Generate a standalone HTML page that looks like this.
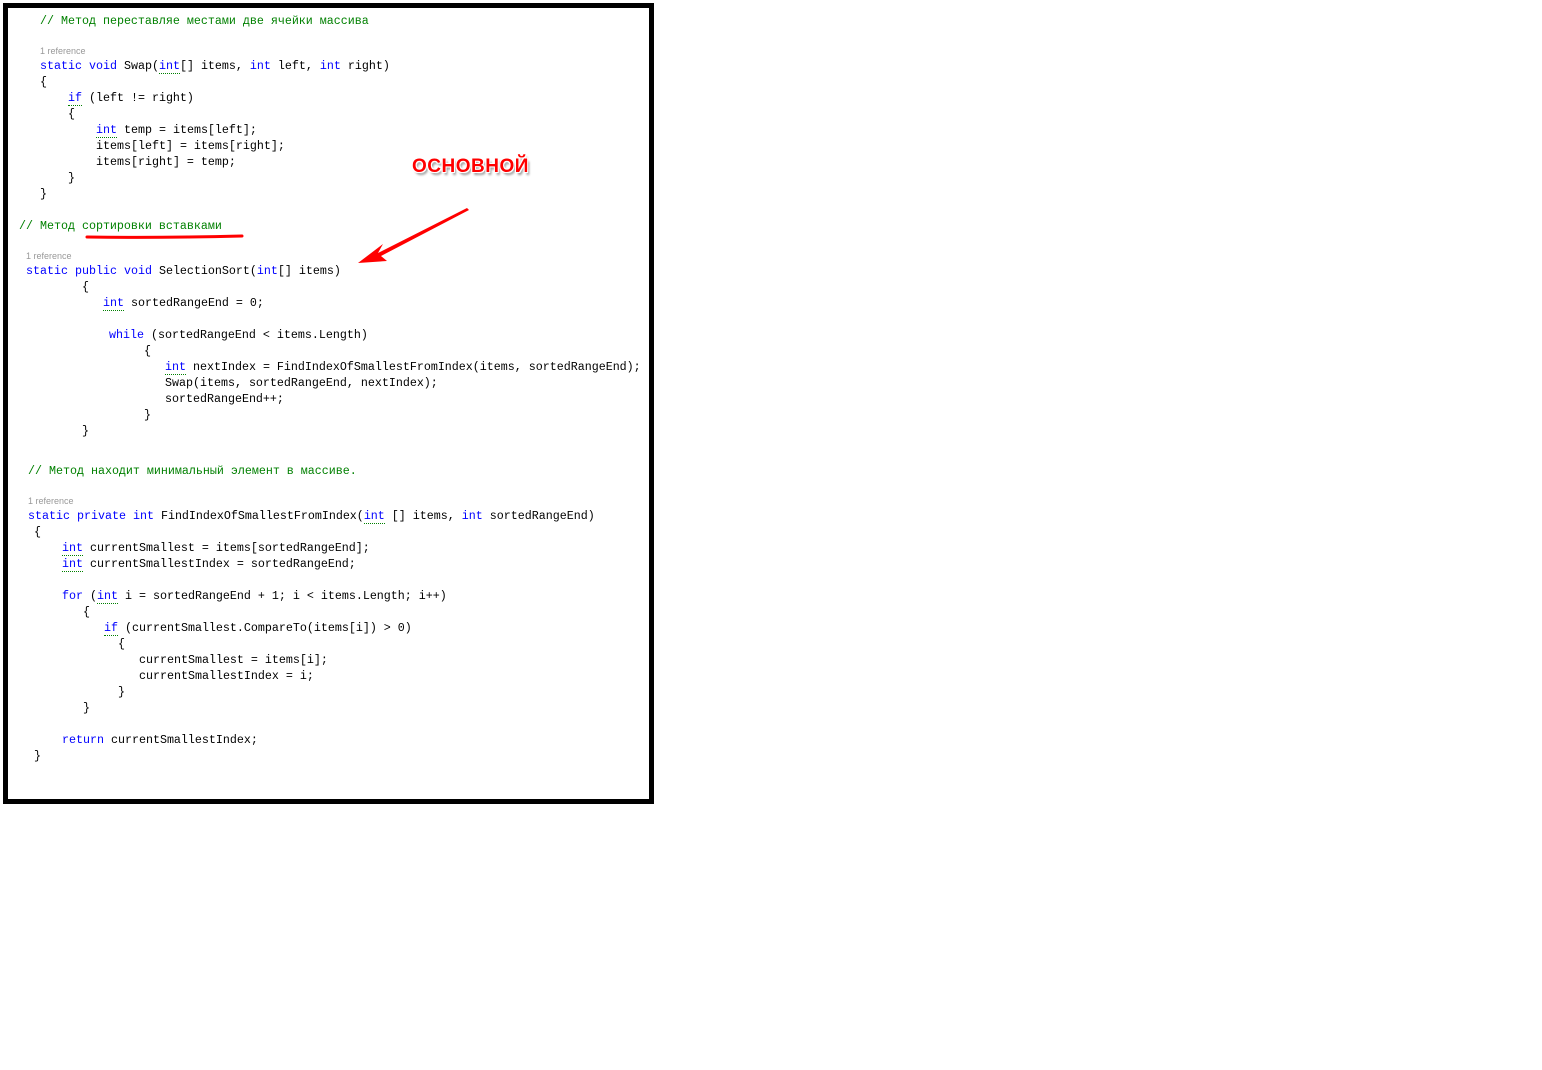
<!DOCTYPE html>
<html><head><meta charset="utf-8"><style>
html,body{margin:0;padding:0;background:#fff;width:1542px;height:1070px;overflow:hidden}
#box{position:absolute;left:3px;top:3px;width:641px;height:791px;border:5px solid #000;background:#fff}
#w{position:absolute;left:0;top:1px;width:700px;height:800px}
.l{position:absolute;font-family:"Liberation Mono","DejaVu Sans Mono",monospace;font-size:11.67px;line-height:16px;white-space:pre;color:#000}
.c{color:#008000}.k{color:#0000ff}
.u{border-bottom:1px dotted #008000}
.r{position:absolute;font-family:"Liberation Sans",sans-serif;font-size:9px;color:#999;line-height:10px}
#lbl{position:absolute;left:412px;top:156px;font-family:"Liberation Sans",sans-serif;font-weight:bold;font-size:19px;color:#f00;letter-spacing:0.5px;text-shadow:-1px -1px 0 #fff,1px -1px 0 #fff,-1px 1px 0 #fff,1px 1px 0 #fff,2px 3px 2px #999}
</style></head><body>
<div id="box"></div>
<div id="lbl">ОСНОВНОЙ</div>
<svg style="position:absolute;left:0;top:0" width="660" height="300">
<path d="M87 237 Q160 238 242 236" stroke="#f00" stroke-width="3" fill="none" stroke-linecap="round"/>
<polygon points="467,208 378,253 383,244 358,263 387,261 381,256 469,210" fill="#f00"/>
</svg>
<div id="w">
<div class="l c" style="left:40px;top:12px">// Метод переставляе местами две ячейки массива</div>
<div class="r" style="left:40px;top:45px">1 reference</div>
<div class="l" style="left:40px;top:57px"><span class="k">static</span> <span class="k">void</span> Swap(<span class="k u">int</span>[] items, <span class="k">int</span> left, <span class="k">int</span> right)</div>
<div class="l" style="left:40px;top:73px">{</div>
<div class="l" style="left:68px;top:89px"><span class="k u">if</span> (left != right)</div>
<div class="l" style="left:68px;top:105px">{</div>
<div class="l" style="left:96px;top:121px"><span class="k u">int</span> temp = items[left];</div>
<div class="l" style="left:96px;top:137px">items[left] = items[right];</div>
<div class="l" style="left:96px;top:153px">items[right] = temp;</div>
<div class="l" style="left:68px;top:169px">}</div>
<div class="l" style="left:40px;top:185px">}</div>
<div class="l c" style="left:19px;top:217px">// Метод сортировки вставками</div>
<div class="r" style="left:26px;top:250px">1 reference</div>
<div class="l" style="left:26px;top:262px"><span class="k">static</span> <span class="k">public</span> <span class="k">void</span> SelectionSort(<span class="k">int</span>[] items)</div>
<div class="l" style="left:82px;top:278px">{</div>
<div class="l" style="left:103px;top:294px"><span class="k u">int</span> sortedRangeEnd = 0;</div>
<div class="l" style="left:109px;top:326px"><span class="k">while</span> (sortedRangeEnd &lt; items.Length)</div>
<div class="l" style="left:144px;top:342px">{</div>
<div class="l" style="left:165px;top:358px"><span class="k u">int</span> nextIndex = FindIndexOfSmallestFromIndex(items, sortedRangeEnd);</div>
<div class="l" style="left:165px;top:374px">Swap(items, sortedRangeEnd, nextIndex);</div>
<div class="l" style="left:165px;top:390px">sortedRangeEnd++;</div>
<div class="l" style="left:144px;top:406px">}</div>
<div class="l" style="left:82px;top:422px">}</div>
<div class="l c" style="left:28px;top:462px">// Метод находит минимальный элемент в массиве.</div>
<div class="r" style="left:28px;top:495px">1 reference</div>
<div class="l" style="left:28px;top:507px"><span class="k">static</span> <span class="k">private</span> <span class="k">int</span> FindIndexOfSmallestFromIndex(<span class="k u">int</span> [] items, <span class="k">int</span> sortedRangeEnd)</div>
<div class="l" style="left:34px;top:523px">{</div>
<div class="l" style="left:62px;top:539px"><span class="k u">int</span> currentSmallest = items[sortedRangeEnd];</div>
<div class="l" style="left:62px;top:555px"><span class="k u">int</span> currentSmallestIndex = sortedRangeEnd;</div>
<div class="l" style="left:62px;top:587px"><span class="k">for</span> (<span class="k u">int</span> i = sortedRangeEnd + 1; i &lt; items.Length; i++)</div>
<div class="l" style="left:83px;top:603px">{</div>
<div class="l" style="left:104px;top:619px"><span class="k u">if</span> (currentSmallest.CompareTo(items[i]) &gt; 0)</div>
<div class="l" style="left:118px;top:635px">{</div>
<div class="l" style="left:139px;top:651px">currentSmallest = items[i];</div>
<div class="l" style="left:139px;top:667px">currentSmallestIndex = i;</div>
<div class="l" style="left:118px;top:683px">}</div>
<div class="l" style="left:83px;top:699px">}</div>
<div class="l" style="left:62px;top:731px"><span class="k">return</span> currentSmallestIndex;</div>
<div class="l" style="left:34px;top:747px">}</div>
</div>
</body></html>
